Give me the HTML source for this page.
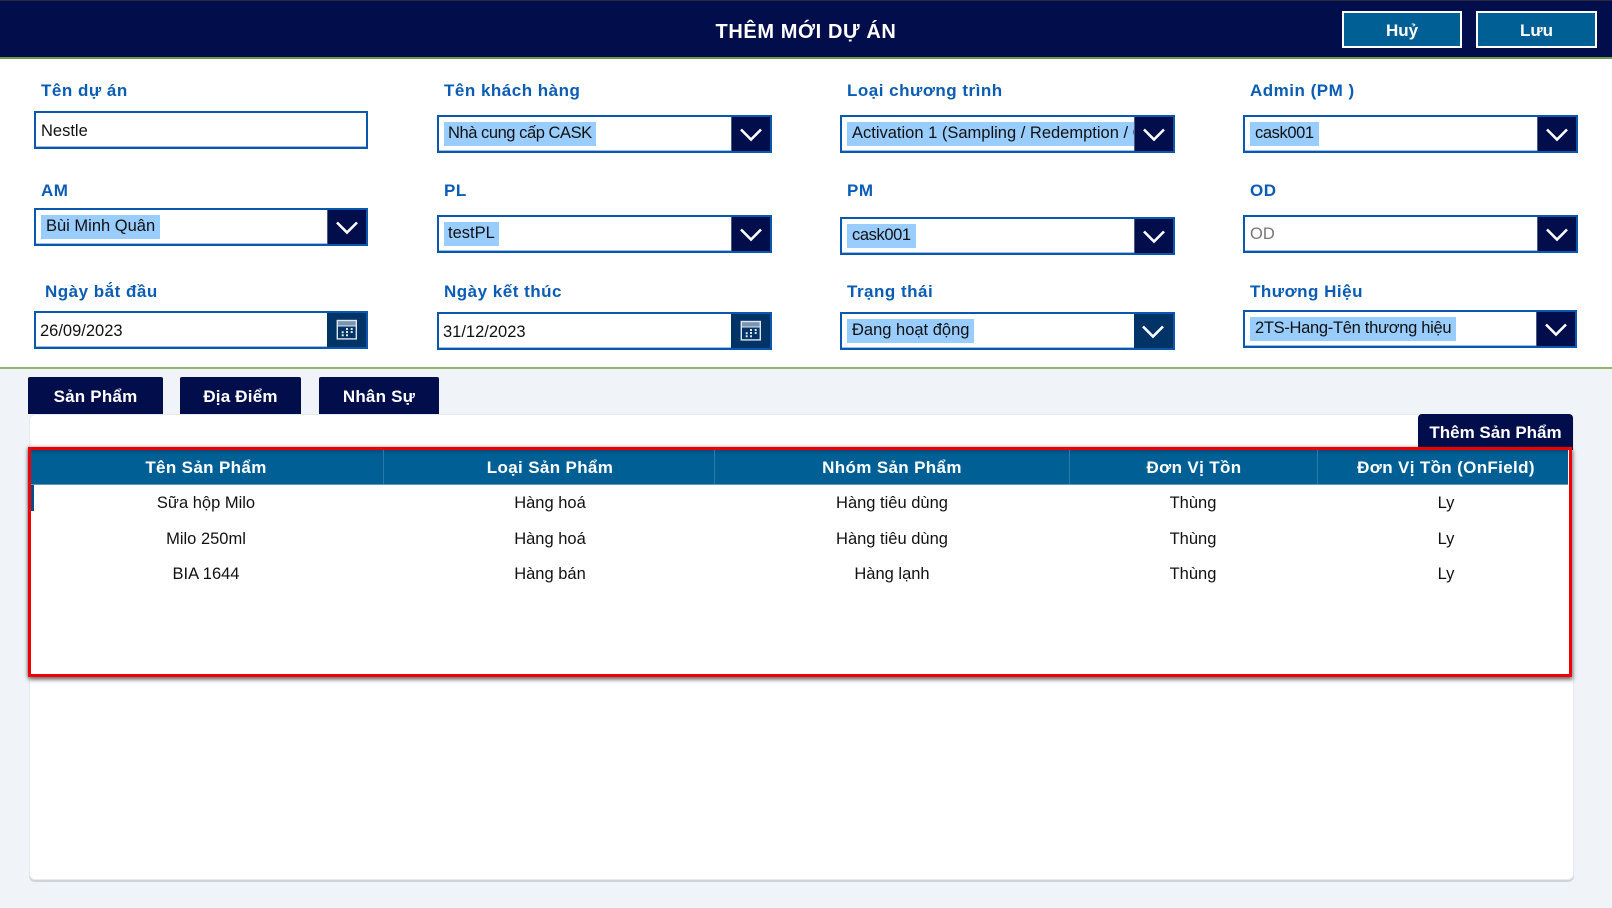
<!DOCTYPE html>
<html lang="vi"><head><meta charset="utf-8"><title>Thêm mới dự án</title>
<style>
*{box-sizing:border-box}
html,body{margin:0;padding:0;width:1612px;height:908px;overflow:hidden;background:#f0f3f8;font-family:"Liberation Sans",sans-serif;color:#111}
.a{position:absolute}
#top{left:0;top:0;width:1612px;height:369px;background:#fff;border-bottom:2px solid #94b36f}
#hd{left:0;top:0;width:1612px;height:59px;background:#010e4b;border-top:1px solid #2a2a3a;border-bottom:2px solid #6f9a45}
#title{left:0;width:1612px;top:20px;text-align:center;color:#fff;font-weight:bold;font-size:20px;line-height:24px;letter-spacing:.6px}
.hb{top:11px;height:37px;width:120px;background:#006095;border:2px solid #fff;color:#fff;font-weight:bold;font-size:17px;line-height:35px;text-align:center}
.l{color:#0b5cb5;font-weight:bold;font-size:17px;line-height:22px;white-space:nowrap;letter-spacing:.5px;margin-top:1px}
.f{width:335px;height:38px;background:#fff;border:2px solid #0a57b0;overflow:hidden;font-size:16.5px;box-shadow:inset 0 -1px 0 #9cc0e8}
.t{position:absolute;left:5px;top:8px;line-height:20px;white-space:nowrap}
.c{position:absolute;left:5px;top:5px;height:24px;background:#99ccff;padding:0 5px;line-height:23px;white-space:nowrap}
.b{position:absolute;right:0;top:0;bottom:0;width:39px;background:#010e4b;border-left:1px solid #4a5a80}
.b.d{background:#003366;border-left:0}
.b svg{position:absolute;left:0;top:0}
.tab{top:377px;height:37px;background:#010e4b;color:#fff;font-weight:bold;font-size:17px;line-height:39px;text-align:center;border-radius:2px 2px 0 0;letter-spacing:.2px}
#card{left:29px;top:414px;width:1545px;height:466px;background:#fff;border:1px solid #e6e9ee;border-radius:6px;box-shadow:0 2px 0 #cfd4da}
#add{left:1418px;top:414px;width:155px;height:36px;background:#010e4b;color:#fff;font-weight:bold;font-size:17px;line-height:38px;text-align:center;border-radius:4px 4px 0 0}
#red{left:28px;top:447px;width:1544px;height:230px;border:3px solid #f00000;background:#fff;box-shadow:1px 3px 4px rgba(60,60,60,.6),-1px 1px 3px rgba(60,60,60,.4),0 -1px 2px rgba(60,60,60,.2)}
#th{left:31px;top:450px;width:1537px;height:35px;background:linear-gradient(#004e7c,#006095 5px);border-bottom:1px solid #5f9cc0}
.sep{top:450px;width:1px;height:34px;background:#2c7aa8}
.h,.d1{position:absolute;text-align:center;white-space:nowrap;transform:translateX(-50%)}
.h{top:457px;color:#fff;font-weight:bold;font-size:17px;line-height:22px;letter-spacing:.35px}
.d1{font-size:16.5px;line-height:22px}
</style></head>
<body>
<svg width="0" height="0" style="position:absolute"><defs>
<symbol id="ch" viewBox="0 0 39 34"><path d="M9 12.5 19 22.5 29 12.5" fill="none" stroke="#fff" stroke-width="2.6"/></symbol>
<symbol id="ca" viewBox="0 0 39 34"><rect x="10.3" y="7.5" width="19" height="18.4" fill="none" stroke="#dfe6ee" stroke-width="1.4"/><rect x="10.3" y="8" width="19" height="5" fill="#dfe6ee" opacity=".55"/><path d="M10.3 13h19" stroke="#dfe6ee" stroke-width="1"/><path d="M19 15h2v2h-2zM23.7 15h2v2h-2zM14.7 18.3h2v2h-2zM19 18h2v2h-2zM23.7 18h2v2h-2zM14.7 21.3h2v2h-2zM19 21.3h2v2h-2z" fill="#dfe6ee"/></symbol>
</defs></svg>

<div class="a" id="top"></div>
<div class="a" id="hd"></div>
<div class="a" id="title">THÊM MỚI DỰ ÁN</div>
<div class="a hb" style="left:1342px">Huỷ</div>
<div class="a hb" style="left:1476px;width:121px">Lưu</div>

<div class="a l" style="left:41px;top:79px">Tên dự án</div>
<div class="a l" style="left:444px;top:79px">Tên khách hàng</div>
<div class="a l" style="left:847px;top:79px">Loại chương trình</div>
<div class="a l" style="left:1250px;top:79px">Admin (PM )</div>
<div class="a l" style="left:41px;top:179px">AM</div>
<div class="a l" style="left:444px;top:179px">PL</div>
<div class="a l" style="left:847px;top:179px">PM</div>
<div class="a l" style="left:1250px;top:179px">OD</div>
<div class="a l" style="left:45px;top:280px">Ngày bắt đầu</div>
<div class="a l" style="left:444px;top:280px">Ngày kết thúc</div>
<div class="a l" style="left:847px;top:280px">Trạng thái</div>
<div class="a l" style="left:1250px;top:280px">Thương Hiệu</div>

<div class="a f" style="left:34px;top:111px;width:334px"><span class="t">Nestle</span></div>
<div class="a f" style="left:437px;top:115px"><span class="c" style="letter-spacing:-.45px;padding:0 4px">Nhà cung cấp CASK</span><div class="b"><svg width="39" height="34"><use href="#ch"/></svg></div></div>
<div class="a f" style="left:840px;top:115px"><span class="c" style="letter-spacing:0">Activation 1 (Sampling / Redemption / Giới thiệu)</span><div class="b"><svg width="39" height="34"><use href="#ch"/></svg></div></div>
<div class="a f" style="left:1243px;top:115px"><span class="c" style="letter-spacing:-.4px">cask001</span><div class="b"><svg width="39" height="34"><use href="#ch"/></svg></div></div>

<div class="a f" style="left:34px;top:208px;width:334px"><span class="c">Bùi Minh Quân</span><div class="b"><svg width="39" height="34"><use href="#ch"/></svg></div></div>
<div class="a f" style="left:437px;top:215px"><span class="c" style="padding:0 4px">testPL</span><div class="b"><svg width="39" height="34"><use href="#ch"/></svg></div></div>
<div class="a f" style="left:840px;top:217px"><span class="c" style="letter-spacing:-.4px">cask001</span><div class="b"><svg width="39" height="34"><use href="#ch"/></svg></div></div>
<div class="a f" style="left:1243px;top:215px"><span class="t" style="color:#777;left:5px;top:7px">OD</span><div class="b"><svg width="39" height="34"><use href="#ch"/></svg></div></div>

<div class="a f" style="left:34px;top:311px;width:334px"><span class="t" style="left:4px">26/09/2023</span><div class="b d"><svg width="39" height="34"><use href="#ca"/></svg></div></div>
<div class="a f" style="left:437px;top:312px"><span class="t" style="left:4px">31/12/2023</span><div class="b d"><svg width="39" height="34"><use href="#ca"/></svg></div></div>
<div class="a f" style="left:840px;top:312px"><span class="c">Đang hoạt động</span><div class="b d"><svg width="39" height="34"><use href="#ch"/></svg></div></div>
<div class="a f" style="left:1243px;top:310px;width:334px"><span class="c" style="letter-spacing:-.3px">2TS-Hang-Tên thương hiệu</span><div class="b"><svg width="39" height="34"><use href="#ch"/></svg></div></div>

<div class="a tab" style="left:28px;width:135px">Sản Phẩm</div>
<div class="a tab" style="left:180px;width:121px">Địa Điểm</div>
<div class="a tab" style="left:319px;width:120px">Nhân Sự</div>

<div class="a" id="card"></div>
<div class="a" id="add">Thêm Sản Phẩm</div>
<div class="a" id="red"></div>
<div class="a" id="th"></div>
<div class="a sep" style="left:383px"></div>
<div class="a sep" style="left:714px"></div>
<div class="a sep" style="left:1069px"></div>
<div class="a sep" style="left:1317px"></div>
<div class="a" style="left:31px;top:485px;width:3px;height:26px;background:#004f88"></div>

<div class="h" style="left:206px">Tên Sản Phẩm</div>
<div class="h" style="left:550px">Loại Sản Phẩm</div>
<div class="h" style="left:892px">Nhóm Sản Phẩm</div>
<div class="h" style="left:1194px">Đơn Vị Tồn</div>
<div class="h" style="left:1446px">Đơn Vị Tồn (OnField)</div>

<div class="d1" style="left:206px;top:492px">Sữa hộp Milo</div>
<div class="d1" style="left:550px;top:492px">Hàng hoá</div>
<div class="d1" style="left:892px;top:492px">Hàng tiêu dùng</div>
<div class="d1" style="left:1193px;top:492px">Thùng</div>
<div class="d1" style="left:1446px;top:492px">Ly</div>

<div class="d1" style="left:206px;top:528px">Milo 250ml</div>
<div class="d1" style="left:550px;top:528px">Hàng hoá</div>
<div class="d1" style="left:892px;top:528px">Hàng tiêu dùng</div>
<div class="d1" style="left:1193px;top:528px">Thùng</div>
<div class="d1" style="left:1446px;top:528px">Ly</div>

<div class="d1" style="left:206px;top:563px">BIA 1644</div>
<div class="d1" style="left:550px;top:563px">Hàng bán</div>
<div class="d1" style="left:892px;top:563px">Hàng lạnh</div>
<div class="d1" style="left:1193px;top:563px">Thùng</div>
<div class="d1" style="left:1446px;top:563px">Ly</div>
</body></html>
